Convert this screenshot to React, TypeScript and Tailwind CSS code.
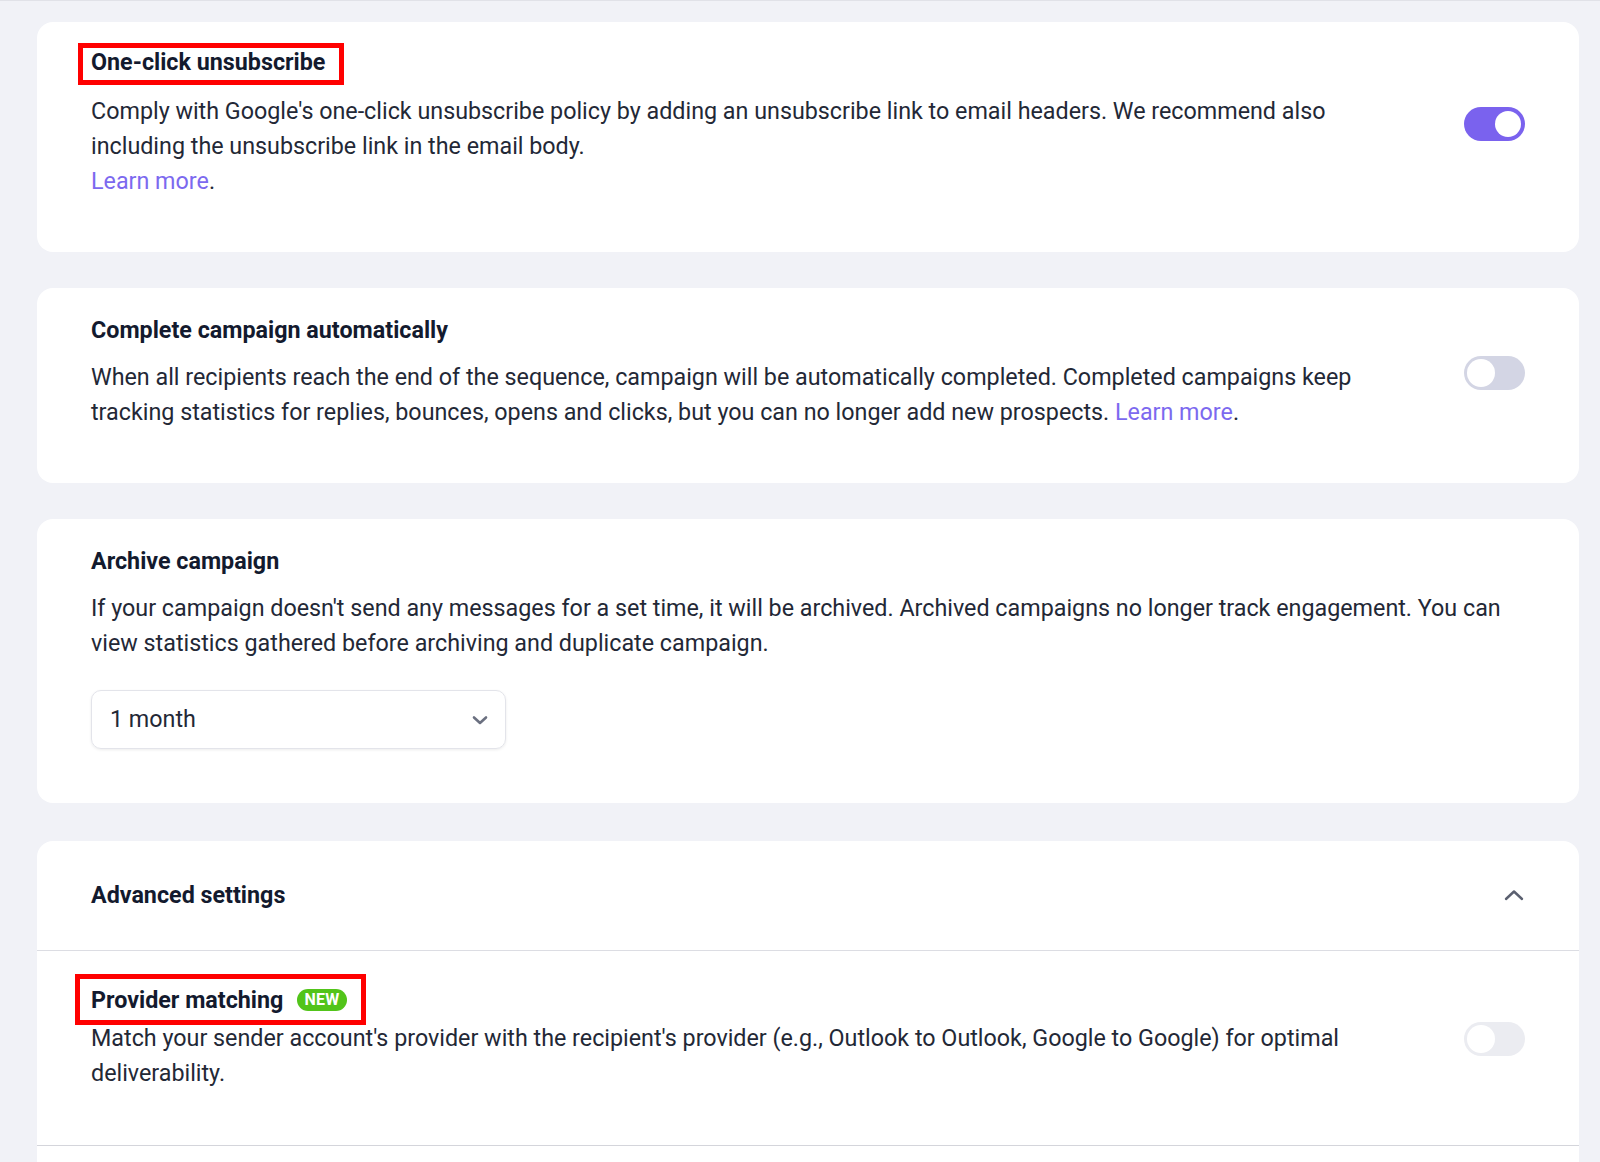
import React from "react";

function Toggle({ state }: { state: "on" | "off" | "disabled" }) {
  if (state === "on") {
    return (
      <div className="w-[61px] h-[34px] rounded-full bg-[#7a62ee] flex items-center justify-end px-[4px] shrink-0">
        <div className="w-[26px] h-[26px] rounded-full bg-white" />
      </div>
    );
  }
  if (state === "off") {
    return (
      <div className="w-[61px] h-[34px] rounded-full bg-[#d3d5e4] flex items-center justify-start px-[3px] shrink-0">
        <div className="w-[28px] h-[28px] rounded-full bg-white" />
      </div>
    );
  }
  return (
    <div className="w-[61px] h-[34px] rounded-full bg-[#ebecf1] flex items-center justify-start px-[3px] shrink-0">
      <div className="w-[28px] h-[28px] rounded-full bg-white" />
    </div>
  );
}

export default function App() {
  return (
    <div
      className="min-h-[1162px] bg-[#f1f2f7] border-t border-[#e1e2e8] pl-[37px] pr-[21px] pt-[21px] text-[#232836]"
      style={{ fontFamily: "Roboto, 'Liberation Sans', sans-serif" }}
    >
      {/* Card 1 */}
      <div className="bg-white rounded-[16px] pt-[26px] pb-[53px] px-[54px] flex items-center gap-[64px]">
        <div className="flex-1">
          <div className="relative inline-block">
            <h2 className="text-[23.3px] leading-[28px] font-bold text-[#131a2e]">One-click unsubscribe</h2>
            <div className="absolute left-[-13px] right-[-19px] top-[-5px] bottom-[-9px] border-[5px] border-[#ff0000] pointer-events-none" />
          </div>
          <p className="mt-[17px] text-[23.3px] leading-[35px]">
            Comply with Google's one-click unsubscribe policy by adding an unsubscribe link to email headers. We recommend also
            including the unsubscribe link in the email body.
            <br />
            <span className="text-[#7c69ef]">Learn more</span>.
          </p>
        </div>
        <Toggle state="on" />
      </div>

      {/* Card 2 */}
      <div className="mt-[36px] bg-white rounded-[16px] pt-[28px] pb-[53px] px-[54px] flex items-center gap-[64px]">
        <div className="flex-1">
          <h2 className="text-[23.3px] leading-[28px] font-bold text-[#131a2e]">Complete campaign automatically</h2>
          <p className="mt-[16px] text-[23.3px] leading-[35px]">
            When all recipients reach the end of the sequence, campaign will be automatically completed. Completed campaigns keep
            tracking statistics for replies, bounces, opens and clicks, but you can no longer add new prospects.{" "}
            <span className="text-[#7c69ef]">Learn more</span>.
          </p>
        </div>
        <Toggle state="off" />
      </div>

      {/* Card 3 */}
      <div className="mt-[36px] bg-white rounded-[16px] pt-[28px] pb-[54px] px-[54px]">
        <h2 className="text-[23.3px] leading-[28px] font-bold text-[#131a2e]">Archive campaign</h2>
        <p className="mt-[16px] text-[23.3px] leading-[35px]">
          If your campaign doesn't send any messages for a set time, it will be archived. Archived campaigns no longer track engagement. You can
          view statistics gathered before archiving and duplicate campaign.
        </p>
        <div className="mt-[29px] w-[415px] h-[59px] rounded-[10px] border border-[#e3e4ea] shadow-[0_1px_3px_rgba(0,0,0,0.08)] flex items-center justify-between pl-[18px] pr-[16px]">
          <span className="text-[23.3px] text-[#232836]">1 month</span>
          <svg width="18" height="12" viewBox="0 0 18 12" fill="none">
            <path d="M3 3.5 L9 9 L15 3.5" stroke="#6b7080" strokeWidth="2.6" strokeLinecap="round" strokeLinejoin="round" />
          </svg>
        </div>
      </div>

      {/* Card 4 */}
      <div className="mt-[38px] bg-white rounded-t-[16px]">
        <div className="h-[110px] flex items-center justify-between px-[54px] border-b border-[#dcdde3]">
          <h2 className="text-[23.3px] leading-[28px] font-bold text-[#131a2e] -mt-[2px]">Advanced settings</h2>
          <svg width="22" height="14" viewBox="0 0 22 14" fill="none" className="-mt-[2px]">
            <path d="M3 11 L11 3.5 L19 11" stroke="#5b6070" strokeWidth="2.4" strokeLinecap="round" strokeLinejoin="round" />
          </svg>
        </div>
        <div className="pt-[35px] pb-[54px] px-[54px] flex items-center gap-[64px] border-b border-[#d4d5db]">
          <div className="flex-1">
            <div className="relative inline-flex items-center">
              <h2 className="text-[23.3px] leading-[28px] font-bold text-[#131a2e]">Provider matching</h2>
              <span className="ml-[14px] h-[22px] px-[7px] rounded-full bg-[#52c41a] text-white text-[16px] font-bold leading-[22px] tracking-[0.3px]">
                NEW
              </span>
              <div className="absolute left-[-16px] right-[-19px] top-[-12px] bottom-[-11px] border-[5px] border-[#ff0000] pointer-events-none" />
            </div>
            <p className="mt-[6px] text-[23.3px] leading-[35px]">
              Match your sender account's provider with the recipient's provider (e.g., Outlook to Outlook, Google to Google) for optimal
              deliverability.
            </p>
          </div>
          <Toggle state="disabled" />
        </div>
        <div className="h-[40px]" />
      </div>
    </div>
  );
}
